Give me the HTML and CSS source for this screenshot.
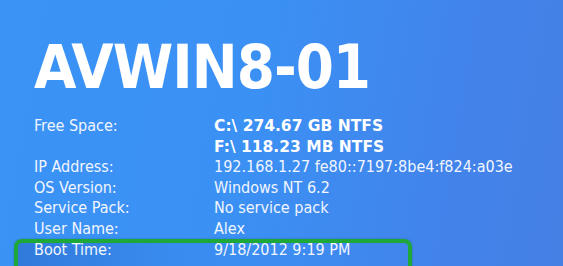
FILE: index.html
```html
<!DOCTYPE html>
<html lang="en">
<head>
    <meta charset="UTF-8">
    <meta name="viewport" content="width=device-width, initial-scale=1.0">
    <title>AVWIN8-01</title>
    <link rel="stylesheet" href="styles.css">
</head>
<body>
    <div class="desktop">
        <h1 class="host">AVWIN8-01</h1>

        <div class="info">
            <div class="row">
                <span class="label">Free Space:</span>
                <span class="value bold">C:\ 274.67 GB NTFS<br>F:\ 118.23 MB NTFS</span>
            </div>
            <div class="row">
                <span class="label">IP Address:</span>
                <span class="value">192.168.1.27 fe80::7197:8be4:f824:a03e</span>
            </div>
            <div class="row">
                <span class="label">OS Version:</span>
                <span class="value">Windows NT 6.2</span>
            </div>
            <div class="row">
                <span class="label">Service Pack:</span>
                <span class="value">No service pack</span>
            </div>
            <div class="row">
                <span class="label">User Name:</span>
                <span class="value">Alex</span>
            </div>
            <!-- highlighted row -->
            <div class="row highlight">
                <span class="label">Boot Time:</span>
                <span class="value">9/18/2012 9:19 PM</span>
            </div>
        </div>
    </div>
</body>
</html>
```

FILE: styles.css
```css
* {
    margin: 0;
    padding: 0;
    box-sizing: border-box;
}

html, body {
    height: 100%;
    overflow: hidden;
}

body {
    font-family: "DejaVu Sans Condensed", "DejaVu Sans", sans-serif;
    color: #f2f6ff;
    background: linear-gradient(100deg,
        #3b93f6 0%,
        #3b90f4 45%,
        #4283ea 80%,
        #4580e4 100%
    );
}

.desktop {
    padding: 32px 0 0 34px;
}

.host {
    font-family: "DejaVu Sans Condensed", "DejaVu Sans", sans-serif;
    font-weight: bold;
    font-size: 61px;
    line-height: 70px;
    color: #fff;
    letter-spacing: -1px;
}

.info {
    margin-top: 14px;
    display: flex;
    flex-direction: column;
    font-size: 16px;
    line-height: 20.6px;
}

.row {
    display: grid;
    grid-template-columns: 180px auto;
}

.bold {
    font-family: "DejaVu Sans", sans-serif;
    font-weight: bold;
    font-size: 15.5px;
    color: #fff;
}

.highlight {
    position: relative;
}

.highlight::before {
    content: "";
    position: absolute;
    left: -20px;
    top: -1px;
    width: 390px;
    height: 27px;
    border: 4px solid #1fa83a;
    border-radius: 8px;
    background: linear-gradient(90deg, rgba(20, 50, 140, 0.25), rgba(20, 50, 140, 0.05) 40%, rgba(20, 50, 140, 0) 70%);
    box-shadow: 0 0 2px rgba(20, 90, 40, 0.5);
}

.highlight span {
    position: relative;
}
```
